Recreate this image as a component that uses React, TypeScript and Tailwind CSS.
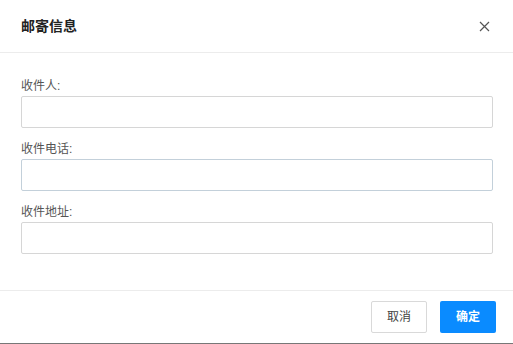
const fields = [
  { label: '收件人:', hover: false },
  { label: '收件电话:', hover: true },
  { label: '收件地址:', hover: false },
]

export default function App() {
  return (
    <div
      className="w-[513px] h-[344px] bg-white flex flex-col overflow-hidden"
      style={{ fontFamily: '"Liberation Sans", "Noto Sans CJK SC", sans-serif' }}
    >
      <div className="h-[53px] shrink-0 flex items-center justify-between pl-[21px] pr-[23px] border-b border-[#ececec]">
        <span className="text-[14px] font-bold text-[#222]">邮寄信息</span>
        <svg width="11" height="11" viewBox="0 0 11 11" className="text-[#555]">
          <path d="M1 1L10 10M10 1L1 10" stroke="currentColor" strokeWidth="1.2" />
        </svg>
      </div>

      <div className="flex flex-col gap-[11px] px-[21px] pt-[23px] pb-[36px] border-b border-[#ececec]">
        {fields.map((f) => (
          <div key={f.label} className="flex flex-col">
            <label className="h-5 leading-5 text-[12px] text-[#555]">{f.label}</label>
            <input
              className={`h-8 w-[472px] rounded-[2px] border bg-white px-2 text-[12px] outline-none ${
                f.hover ? 'border-[#c3d0da]' : 'border-[#d6d6d6]'
              }`}
            />
          </div>
        ))}
      </div>

      <div className="flex justify-end gap-[13px] pt-[10px] pr-[17px]">
        <button className="w-[56px] h-8 rounded-[2px] border border-[#d9d9d9] bg-white text-[12px] text-[#444]">
          取消
        </button>
        <button className="w-[56px] h-8 rounded-[2px] bg-[#0a8bff] text-[12px] font-bold text-white">
          确定
        </button>
      </div>

      <div className="mt-auto h-px bg-[#777]" />
    </div>
  )
}
